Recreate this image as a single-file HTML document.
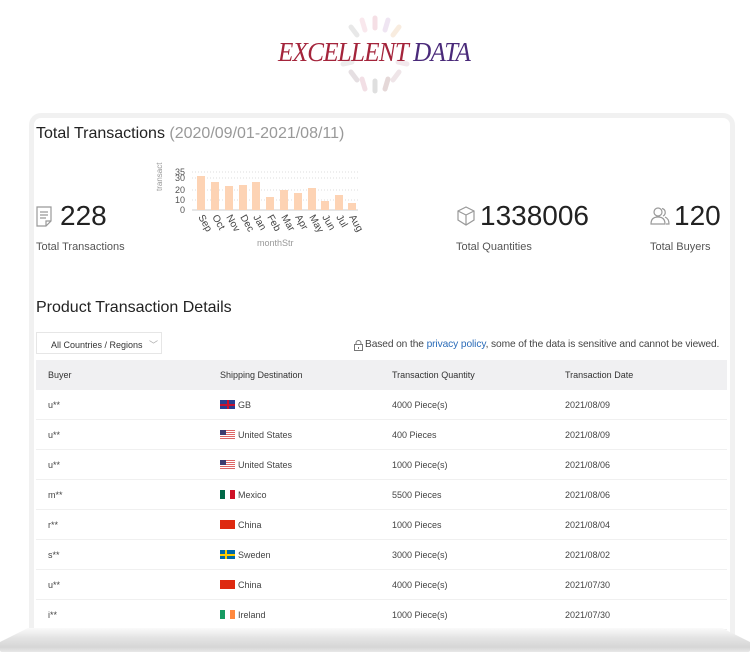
<!DOCTYPE html>
<html><head><meta charset="utf-8"><style>
*{margin:0;padding:0;box-sizing:border-box}
body{width:750px;height:655px;background:#fff;position:relative;overflow:hidden;font-family:"Liberation Sans",sans-serif;color:#333}
.abs{position:absolute}
.card{position:absolute;left:29px;top:113px;width:706px;height:530px;border:5px solid #f1f1f1;border-bottom:none;border-radius:12px 12px 0 0}
.stand{position:absolute;left:0;top:628px;width:750px;height:24px;background:linear-gradient(#fafafa,#e4e4e4 40%,#d6d6d6 80%,#e8e8e8);border-radius:2px;clip-path:polygon(28px 0,722px 0,750px 14px,750px 24px,0 24px,0 14px)}
.big{font-size:28px;color:#222}
.lab{font-size:11px;color:#555}
.row{position:absolute;left:36px;width:691px;height:30px;border-bottom:1px solid #f0f0f0;font-size:9px;color:#444}
.row span{position:absolute;top:10px}
.flag{display:inline-block;width:15px;height:9px;vertical-align:-1px;margin-right:3px}
</style></head><body>
<svg class="abs" style="left:330px;top:12px" width="90" height="85" viewBox="0 0 90 85">
<g fill="none" stroke-width="5" stroke-linecap="round" opacity="0.4">
<line x1="45" y1="6" x2="45" y2="16" stroke="#e8b0c0"/>
<line x1="58" y1="8" x2="55" y2="18" stroke="#d9c0e0"/>
<line x1="32" y1="8" x2="35" y2="18" stroke="#f2c6d4"/>
<line x1="69" y1="15" x2="63" y2="23" stroke="#f0d0b0"/>
<line x1="21" y1="15" x2="27" y2="23" stroke="#c8c8c8"/>
<line x1="45" y1="69" x2="45" y2="79" stroke="#b0b0b0"/>
<line x1="58" y1="67" x2="55" y2="77" stroke="#c0a0a0"/>
<line x1="32" y1="67" x2="35" y2="77" stroke="#e0b0c0"/>
<line x1="69" y1="60" x2="63" y2="68" stroke="#d8c0c8"/>
<line x1="21" y1="60" x2="27" y2="68" stroke="#c0b0b8"/>
<line x1="13" y1="52" x2="22" y2="50" stroke="#d0d0d0"/>
<line x1="77" y1="52" x2="68" y2="50" stroke="#e0c8d0"/>
</g></svg>
<div class="abs" style="left:278px;top:37px;font-family:'Liberation Serif',serif;font-style:italic;font-size:27px;letter-spacing:-0.8px;transform:scaleX(0.93);transform-origin:left;white-space:nowrap"><span style="color:#a4243b">EXCELLENT</span> <span style="color:#4a2a7a">DATA</span></div>

<div class="card"></div>
<div class="abs" style="left:36px;top:125px;font-size:16px;color:#222">Total Transactions <span style="color:#999">(2020/09/01-2021/08/11)</span></div>

<svg class="abs" style="left:36px;top:206px" width="19" height="22" viewBox="0 0 19 22" fill="none" stroke="#999" stroke-width="1.2"><path d="M1 1h14v14l-5 5H1z M15 15h-5v5 M4 6h8 M4 9h8 M4 12h6"/></svg>
<div class="abs big" style="left:60px;top:200px">228</div>
<div class="abs lab" style="left:36px;top:241px">Total Transactions</div>

<svg class="abs" style="left:150px;top:155px" width="220" height="95" viewBox="0 0 220 95">
<text x="0" y="0" transform="translate(12,36) rotate(-90)" font-size="8" fill="#999" font-family="Liberation Sans">transact</text>
<g font-size="9" fill="#555" font-family="Liberation Sans" text-anchor="end">
<text x="35" y="20">35</text><text x="35" y="26">30</text><text x="35" y="38">20</text><text x="35" y="48">10</text><text x="35" y="58">0</text></g>
<g stroke="#ddd" stroke-dasharray="1,2"><line x1="42" y1="17" x2="208" y2="17"/><line x1="42" y1="23" x2="208" y2="23"/><line x1="42" y1="35" x2="208" y2="35"/><line x1="42" y1="45" x2="208" y2="45"/></g>
<line x1="42" y1="55" x2="208" y2="55" stroke="#ccc"/>
<g fill="#fdd3b4">
<rect x="47" y="21" width="8" height="34"/><rect x="61" y="27" width="8" height="28"/><rect x="75" y="31" width="8" height="24"/><rect x="89" y="30" width="8" height="25"/><rect x="102" y="27" width="8" height="28"/><rect x="116" y="42" width="8" height="13"/><rect x="130" y="35" width="8" height="20"/><rect x="144" y="38" width="8" height="17"/><rect x="158" y="33" width="8" height="22"/><rect x="171" y="46" width="8" height="9"/><rect x="185" y="40" width="8" height="15"/><rect x="198" y="48" width="8" height="7"/></g>
<g font-size="10" fill="#444" font-family="Liberation Sans">
<text transform="translate(48,62) rotate(60)">Sep</text><text transform="translate(62,62) rotate(60)">Oct</text><text transform="translate(76,62) rotate(60)">Nov</text><text transform="translate(90,62) rotate(60)">Dec</text><text transform="translate(103,62) rotate(60)">Jan</text><text transform="translate(117,62) rotate(60)">Feb</text><text transform="translate(131,62) rotate(60)">Mar</text><text transform="translate(145,62) rotate(60)">Apr</text><text transform="translate(159,62) rotate(60)">May</text><text transform="translate(172,62) rotate(60)">Jun</text><text transform="translate(186,62) rotate(60)">Jul</text><text transform="translate(199,62) rotate(60)">Aug</text></g>
<text x="107" y="91" font-size="9" fill="#999" font-family="Liberation Sans">monthStr</text>
</svg>

<svg class="abs" style="left:456px;top:206px" width="20" height="20" viewBox="0 0 20 20" fill="none" stroke="#999" stroke-width="1.2"><path d="M10 1l8 4v9l-8 5-8-5V5z M2 5l8 4 8-4 M10 9v10"/></svg>
<div class="abs big" style="left:480px;top:200px">1338006</div>
<div class="abs lab" style="left:456px;top:241px">Total Quantities</div>
<svg class="abs" style="left:650px;top:206px" width="20" height="20" viewBox="0 0 20 20" fill="none" stroke="#999" stroke-width="1.2"><circle cx="8" cy="6" r="4"/><path d="M1 18c0-5 3-7 7-7s7 2 7 7z M12 2.5a4 4 0 0 1 1 7.5 M15 11c2.5 1 4 3 4 7h-3"/></svg>
<div class="abs big" style="left:674px;top:200px">120</div>
<div class="abs lab" style="left:650px;top:241px">Total Buyers</div>

<div class="abs" style="left:36px;top:299px;font-size:16px;color:#222">Product Transaction Details</div>
<div class="abs" style="left:36px;top:332px;width:126px;height:22px;border:1px solid #e6e6e6;font-size:9px;color:#333;padding:5px 0 0 14px">All Countries / Regions <span style="color:#aaa;margin-left:4px">﹀</span></div>
<svg class="abs" style="left:354px;top:340px" width="9" height="11" viewBox="0 0 9 11" fill="none" stroke="#777" stroke-width="1"><rect x="0.5" y="4.5" width="8" height="6"/><path d="M2 4.5V3a2.5 2.5 0 0 1 5 0v1.5 M4.5 7v2"/></svg>
<div class="abs" style="left:365px;top:339px;font-size:10.2px;color:#444;white-space:nowrap;letter-spacing:-0.1px">Based on the <span style="color:#2a6bb8">privacy policy</span>, some of the data is sensitive and cannot be viewed.</div>

<div class="abs" style="left:36px;top:360px;width:691px;height:30px;background:#f0f0f2;font-size:9px;color:#333">
<span class="abs" style="left:12px;top:10px">Buyer</span><span class="abs" style="left:184px;top:10px">Shipping Destination</span><span class="abs" style="left:356px;top:10px">Transaction Quantity</span><span class="abs" style="left:529px;top:10px">Transaction Date</span></div>

<div class="row" style="top:390px"><span style="left:12px">u**</span><span style="left:184px"><i class="flag" style="background:linear-gradient(#c8102e,#c8102e) center/100% 2px no-repeat,linear-gradient(#c8102e,#c8102e) center/2px 100% no-repeat,#2a3f8f"></i>GB</span><span style="left:356px">4000 Piece(s)</span><span style="left:529px">2021/08/09</span></div>
<div class="row" style="top:420px"><span style="left:12px">u**</span><span style="left:184px"><i class="flag" style="background:linear-gradient(#3c3b6e,#3c3b6e) 0 0/6px 5px no-repeat,repeating-linear-gradient(#d66 0 1px,#fff 1px 2px)"></i>United States</span><span style="left:356px">400 Pieces</span><span style="left:529px">2021/08/09</span></div>
<div class="row" style="top:450px"><span style="left:12px">u**</span><span style="left:184px"><i class="flag" style="background:linear-gradient(#3c3b6e,#3c3b6e) 0 0/6px 5px no-repeat,repeating-linear-gradient(#d66 0 1px,#fff 1px 2px)"></i>United States</span><span style="left:356px">1000 Piece(s)</span><span style="left:529px">2021/08/06</span></div>
<div class="row" style="top:480px"><span style="left:12px">m**</span><span style="left:184px"><i class="flag" style="background:linear-gradient(90deg,#006847 33%,#fff 33% 66%,#ce1126 66%)"></i>Mexico</span><span style="left:356px">5500 Pieces</span><span style="left:529px">2021/08/06</span></div>
<div class="row" style="top:510px"><span style="left:12px">r**</span><span style="left:184px"><i class="flag" style="background:#de2910"></i>China</span><span style="left:356px">1000 Pieces</span><span style="left:529px">2021/08/04</span></div>
<div class="row" style="top:540px"><span style="left:12px">s**</span><span style="left:184px"><i class="flag" style="background:linear-gradient(#fecc00,#fecc00) center/100% 2px no-repeat,linear-gradient(#fecc00,#fecc00) 5px 0/2px 100% no-repeat,#006aa7"></i>Sweden</span><span style="left:356px">3000 Piece(s)</span><span style="left:529px">2021/08/02</span></div>
<div class="row" style="top:570px"><span style="left:12px">u**</span><span style="left:184px"><i class="flag" style="background:#de2910"></i>China</span><span style="left:356px">4000 Piece(s)</span><span style="left:529px">2021/07/30</span></div>
<div class="row" style="top:600px"><span style="left:12px">i**</span><span style="left:184px"><i class="flag" style="background:linear-gradient(90deg,#169b62 33%,#fff 33% 66%,#ff883e 66%)"></i>Ireland</span><span style="left:356px">1000 Piece(s)</span><span style="left:529px">2021/07/30</span></div>

<div class="stand"></div>
</body></html>
